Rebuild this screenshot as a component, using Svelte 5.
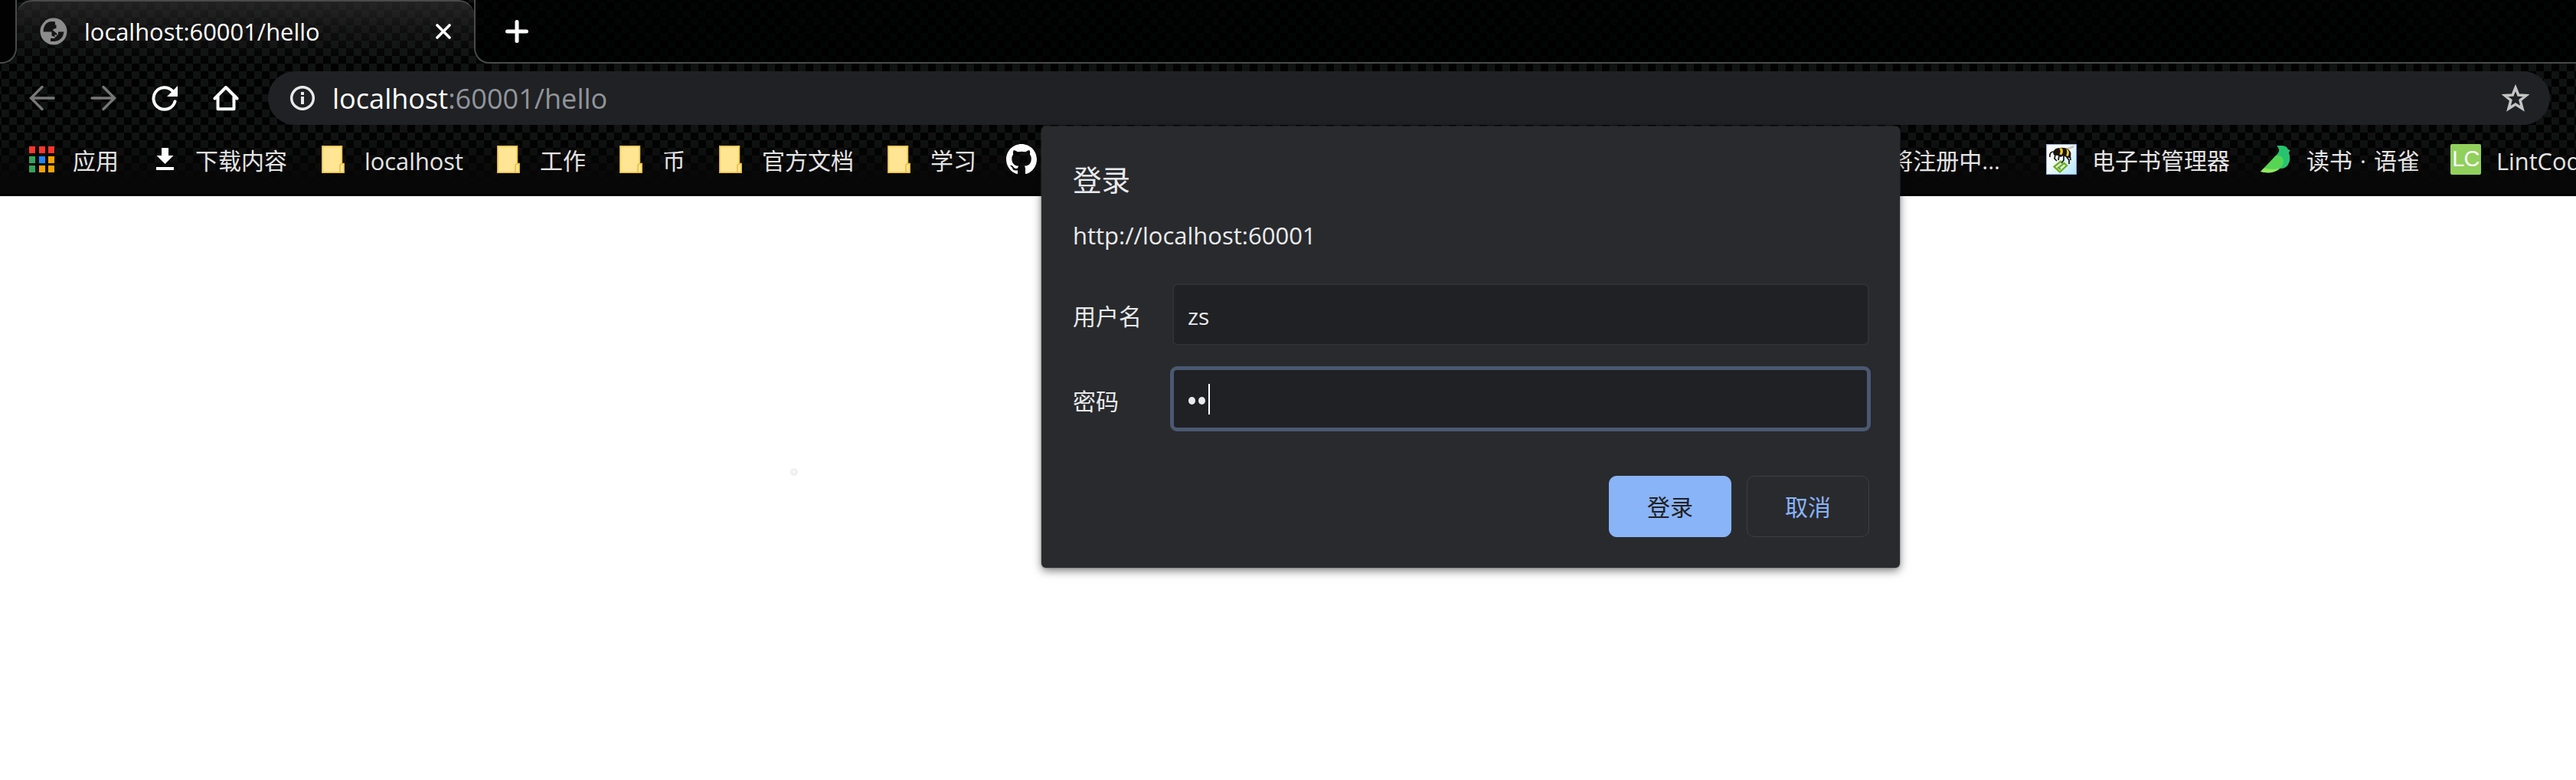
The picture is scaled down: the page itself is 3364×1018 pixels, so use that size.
<script lang="ts">
  const folders = ['localhost', '工作', '币', '官方文档', '学习'];
  const appColors = ['#f9372d', '#f9372d', '#f9372d', '#34a35b', '#1f87f5', '#f5a300', '#34a35b', '#f5a300', '#f5a300'];
</script>

<div class="browser">
  <header class="chrome">
    <div class="tabs">
      <div class="tab-left"></div>
      <div class="tab">
        <svg class="globe" viewBox="0 0 36 36"><circle cx="18" cy="18" r="17.500" fill="#8c8c8c"/><path d="M20 5.500Q8 3 5 14L4.500 18.500H15.500V23.500L20 25.500Q23 24 22.500 21L17 16.500Q17 14.500 21.500 14V9.500H20ZM24 18.500H31.500Q30 30 19.500 31H14V27H19.500V22.500H24Z" fill="#151515"/></svg>
        <span class="title">localhost:60001/hello</span>
        <svg class="close" viewBox="0 0 20 20"><path d="M2 2L18 18M18 2L2 18" stroke="#fff" stroke-width="3.600" stroke-linecap="round"/></svg>
      </div>
      <div class="tab-right">
        <svg class="plus" viewBox="0 0 30 30"><path d="M15 2.500V27.500M2.500 15H27.500" stroke="#fff" stroke-width="5" stroke-linecap="round"/></svg>
      </div>
    </div>
    <div class="toolbar">
      <svg class="nav" viewBox="0 0 34 34"><path d="M32 17H3M17 2.500L2.500 17L17 31.500" fill="none" stroke="#777" stroke-width="3.400" stroke-linecap="round"/></svg>
      <svg class="nav" viewBox="0 0 34 34"><path d="M2 17H31M17 2.500L31.500 17L17 31.500" fill="none" stroke="#777" stroke-width="3.400" stroke-linecap="round"/></svg>
      <svg class="nav" viewBox="0 0 34 34"><path d="M30.500 21.500A14.300 14.300 0 1 1 27 7.500" fill="none" stroke="#fff" stroke-width="4" stroke-linecap="round"/><path d="M34 1V15H20Z" fill="#fff"/></svg>
      <svg class="nav" viewBox="0 0 34 34"><path d="M2.500 17.500L17 3L31.500 17.500M6.500 15V31.300H27.500V15" fill="none" stroke="#fff" stroke-width="4" stroke-linecap="round" stroke-linejoin="round"/></svg>
      <div class="omnibox">
        <svg class="info" viewBox="0 0 32 32"><circle cx="16" cy="16" r="14.300" fill="none" stroke="#e8e8e8" stroke-width="3.500"/><path d="M14 8H18V12H14ZM14 14H18V24H14Z" fill="#e8e8e8"/></svg>
        <span class="url">localhost<span class="dim">:60001/hello</span></span>
        <svg class="star" viewBox="0 0 36 36"><path d="M18 4.500L21.800 14L32 14.600L24.100 21L27 31.800L18 26L9 31.800L11.900 21L4 14.600L14.200 14Z" fill="none" stroke="#c4c4c4" stroke-width="3.500"/></svg>
      </div>
    </div>
    <nav class="bookmarks">
      <div class="bm apps">
        <div class="grid">{#each appColors as c}<i style="background:{c}"></i>{/each}</div>
        <span>应用</span>
      </div>
      <div class="bm downloads">
        <svg viewBox="0 0 23 30"><path d="M7 0H16V10H22.500L11.500 21L0.500 10H7ZM0 25H23V29H0Z" fill="#fff"/></svg>
        <span>下载内容</span>
      </div>
      {#each folders as name}
        <div class="bm folder">
          <svg viewBox="0 0 30 36"><path d="M.8.8H26.500V23.500H29.200V35.200H.8Z" fill="#ffe594" stroke="#e8bd3a" stroke-width="1.500"/><path d="M24 35V26Q24 24 26.500 24" fill="none" stroke="#e8bd3a" stroke-width="1.500"/></svg>
          <span class:latin={name === 'localhost'}>{name}</span>
        </div>
      {/each}
      <svg class="github" viewBox="0 0 16 16"><path fill="#fff" d="M8 0C3.580 0 0 3.580 0 8c0 3.540 2.290 6.530 5.470 7.590.4.070.55-.17.55-.38 0-.19-.01-.82-.01-1.490-2.010.37-2.530-.49-2.690-.94-.09-.23-.48-.94-.82-1.130-.28-.15-.68-.52-.01-.53.63-.01 1.080.58 1.230.82.72 1.210 1.870.87 2.330.66.07-.52.28-.87.51-1.070-1.780-.2-3.640-.89-3.640-3.950 0-.87.31-1.590.82-2.150-.08-.2-.36-1.020.08-2.120 0 0 .67-.21 2.200.82.64-.18 1.320-.27 2-.27s1.360.09 2 .27c1.530-1.040 2.200-.82 2.200-.82.44 1.100.16 1.920.08 2.120.51.56.82 1.270.82 2.150 0 3.070-1.870 3.750-3.650 3.950.29.25.54.73.54 1.480 0 1.070-.01 1.930-.01 2.200 0 .21.15.46.55.38A8.010 8.010 0 0 0 16 8c0-4.420-3.580-8-8-8"/></svg>
      <div class="bm pending"><span>将注册中...</span></div>
      <div class="bm site ebook">
        <svg viewBox="0 0 40 40"><defs><linearGradient id="sky" x1="0" y1="0" x2="1" y2="1"><stop offset="0" stop-color="#fff"/><stop offset=".4" stop-color="#f4fcff"/><stop offset="1" stop-color="#b0e6ff"/></linearGradient></defs><rect x=".5" y=".5" width="39" height="39" fill="url(#sky)" stroke="#8aa6e8"/><path d="M24 6L37 1.500L36 5L28 7.500Z" fill="#c9c9bd"/><path d="M10 9Q12 5 18 5Q27 4 31 9Q34 13 31 18Q26 18 23 15L19 17Q16 14 11 15Q8 12 10 9Z" fill="#17130f"/><path d="M17 5.500H21Q23 10 20.500 14L17.500 13.500Q20 9 17 5.500ZM26 6L29 8Q31 12 28.500 16L26 15Q28.500 10 26 6Z" fill="#ffc91c"/><path d="M10 10Q4 10 5 17M12 14L11 19L14 22M17 15L16 21M23 15V21L20 25M27 17L30 21V26M31 14L32 21" fill="none" stroke="#17130f" stroke-width="1.700"/><path d="M20 22L10.500 29.500L18 36.500L27 28L23.500 25L16 31L19 33" fill="none" stroke="#6fae16" stroke-width="2.300"/></svg>
        <span>电子书管理器</span>
      </div>
      <div class="bm site yuque">
        <svg viewBox="0 0 40 40"><path d="M21 2.300Q34 .5 36 7L39 8L37 11Q40 20 36 27Q33 32 26 32L12 24L22 13Q27 8 21 2.300Z" fill="#27c46f"/><path d="M0 36L20 15Q29 14 30 22Q30 28 24 33Q15 40 0 36Z" fill="#56d554"/><path d="M0 36L4.500 31.500Q15 34 25 32Q15 40 0 36Z" fill="#93e85e"/></svg>
        <span>读书 · 语雀</span>
      </div>
      <div class="bm site lint">
        <div class="lc">LC</div>
        <span class="latin">LintCode</span>
      </div>
    </nav>
  </header>

  <main class="page"><div class="speck"></div></main>

  <section class="dialog">
    <h1>登录</h1>
    <p class="origin">http://localhost:60001</p>
    <div class="row"><span class="label">用户名</span><div class="field">zs</div></div>
    <div class="row"><span class="label">密码</span><div class="field focus"><i class="dot"></i><i class="dot"></i><i class="caret"></i></div></div>
    <div class="actions"><button class="primary">登录</button><button>取消</button></div>
  </section>
</div>

<style>
  :global(body) { background: #fff; overflow: hidden; }
  * { box-sizing: border-box; }
  svg { display: block; flex: none; }
  .browser { position: relative; width: 3364px; height: 1018px; overflow: hidden; font-family: "Open Sans", "Noto Sans CJK SC", sans-serif; }
  .chrome {
    height: 256px; display: flex; flex-direction: column; border-bottom: 3px solid #000;
    background:
      linear-gradient(180deg, transparent 180px, #070707 236px),
      repeating-conic-gradient(#010101 0 25%, #111212 0 50%) 2px 3px / 20px 20px;
  }
  .tabs { display: flex; height: 83px; flex: none; }
  .tab-left { width: 22px; border-bottom: 2px solid #4a4a4a; border-right: 2px solid #4a4a4a; border-bottom-right-radius: 20px; background: #020202; }
  .tab {
    width: 597px; height: 83px; display: flex; align-items: center; padding: 0 30px 4px 30px;
    border-top: 2px solid #4a4a4a; border-radius: 20px 20px 0 0;
    background: linear-gradient(180deg, rgba(44,44,44,.75), rgba(30,30,30,.5) 45%, transparent);
  }
  .globe { width: 36px; height: 36px; }
  .title { margin-left: 22px; font-size: 30.900px; line-height: 40px; color: #fff; white-space: nowrap; }
  .close { width: 20px; height: 20px; margin-left: auto; }
  .tab-right { flex: 1; border-bottom: 2px solid #4a4a4a; border-left: 2px solid #4a4a4a; border-bottom-left-radius: 20px; background: rgba(0,0,0,.78); padding: 26px 0 0 39px; }
  .plus { width: 30px; height: 30px; }
  .toolbar { height: 80px; flex: none; padding: 10px 34px 0 38px; display: flex; align-items: center; gap: 46px; }
  .nav { width: 34px; height: 34px; }
  .omnibox { margin-left: -8px; flex: 1; height: 70px; border-radius: 35px; background: #202124; display: flex; align-items: center; padding: 0 27px 0 29px; }
  .info { width: 32px; height: 32px; }
  .url { margin-left: 23px; font-size: 36.100px; line-height: 50px; color: #fff; white-space: nowrap; }
  .dim { color: #92959a; }
  .star { width: 36px; height: 36px; margin-left: auto; }
  .bookmarks { height: 90px; display: flex; align-items: center; padding: 0 0 0 38px; color: #e4e4e4; font-size: 30px; line-height: 40px; white-space: nowrap; overflow: hidden; }
  .bm { display: flex; align-items: center; flex: none; }
  .bm span { padding-top: 4px; }
  .bm .latin { font-size: 30.800px; padding-top: 3px; }
  .apps { width: 166px; gap: 24px; }
  .grid { display: grid; grid-template-columns: repeat(3, 8px); grid-auto-rows: 9px; gap: 3.500px 4.500px; }
  .downloads { width: 216px; gap: 28px; }
  .downloads svg { width: 23px; height: 30px; }
  .folder { gap: 26px; margin-right: 44px; }
  .folder svg { width: 30px; height: 36px; }
  .github { width: 40px; height: 40px; margin-left: -5px; }
  .pending { width: 1318px; justify-content: flex-end; padding-right: 60px; }
  .site { gap: 20px; margin-right: 40px; }
  .site svg { width: 40px; height: 40px; }
  .yuque span { word-spacing: 2.200px; }
  .lc { width: 40px; height: 40px; background: #91d05c; border-radius: 2px; color: #fff; font-family: "Liberation Sans", sans-serif; font-size: 29px; line-height: 38px; letter-spacing: -1px; text-align: center; }
  .page { height: 762px; padding: 354px 0 0 1031px; }
  .speck { width: 12px; height: 12px; border-radius: 6px; background: radial-gradient(#fff 12%, #ebebeb 30%, #fff 75%); }
  .dialog {
    position: absolute; left: 1360px; top: 165px; width: 1121px; height: 576px; padding: 43px 40px 40px 41px;
    background: #292a2d; border-radius: 6px; color: #e8eaed; box-shadow: 0 0 2px #555, 0 4px 12px rgba(0,0,0,.5);
    display: flex; flex-direction: column; font-size: 30px; line-height: 40px;
  }
  h1 { margin: 0; font-size: 37.500px; line-height: 54px; font-weight: 400; }
  .origin { margin: 22px 0 42px; font-size: 31px; line-height: 46px; height: 44px; }
  .row { display: flex; align-items: center; height: 81px; margin-bottom: 30px; flex: none; }
  .label { width: 130px; flex: none; padding-top: 4px; }
  .field { flex: 1; height: 81px; border: 2px solid #303134; border-radius: 7px; background: #202124; padding: 4px 18px 0; display: flex; align-items: center; }
  .focus { height: 85px; margin: -3px -2px -1px -3px; border: 5px solid #4a5872; border-radius: 9px; padding: 1px 0 0 19px; }
  .dot { width: 9px; height: 10px; margin: 4px 4px 0 0; border-radius: 50%; background: #e8eaed; }
  .caret { width: 2px; height: 40px; background: #fff; }
  .actions { display: flex; justify-content: flex-end; gap: 20px; margin-top: 29px; }
  button { width: 160px; height: 80px; padding: 2px 0 0; border: 1px solid #3c4043; border-radius: 10px; background: transparent; color: #8ab4f8; font: inherit; }
  .primary { background: #8ab4f8; border-color: #8ab4f8; color: #202124; }
</style>
